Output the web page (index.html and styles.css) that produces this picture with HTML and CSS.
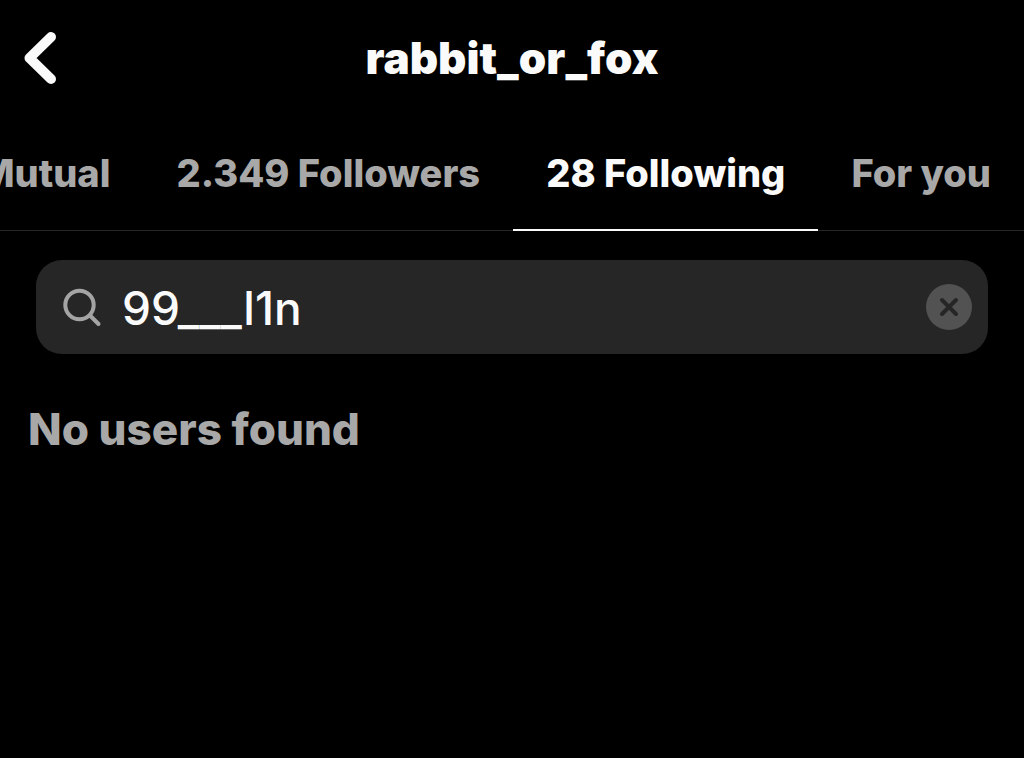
FILE: index.html
```
<!DOCTYPE html>
<html lang="en">
<head>
  <meta charset="UTF-8" />
  <meta name="viewport" content="width=device-width, initial-scale=1.0"/>
  <title>rabbit_or_fox</title>
  <link rel="stylesheet" href="styles.css">
</head>
<body>
  <header class="header">
    <button class="back" type="button" aria-label="Back">
      <svg width="36" height="56" viewBox="0 0 36 56" fill="none" stroke="#fafafa" stroke-linecap="round" stroke-linejoin="round">
        <path stroke-width="10" d="M29 7 L7.5 28 L29 49"/>
      </svg>
    </button>
    <h1 class="username">rabbit_or_fox</h1>
  </header>

  <nav class="tabs">
    <a class="tab" href="#mutual">Mutual</a>
    <a class="tab" href="#followers">2.349 Followers</a>
    <a class="tab active" href="#following">28 Following</a>
    <a class="tab" href="#foryou">For you</a>
  </nav>

  <main class="content">
    <form class="search">
      <svg width="40" height="40" viewBox="0 0 40 40" fill="none" stroke="#a4a4a4" stroke-width="4" stroke-linecap="round">
        <circle cx="17.5" cy="18" r="14.2"/>
        <path d="M28 28.5 L36.5 37"/>
      </svg>
      <input class="search-input" type="text" aria-label="Search" value="99___l1n">
      <button class="clear" type="button" aria-label="Clear search">
        <svg width="20" height="20" viewBox="0 0 20 20" fill="none" stroke="#262626" stroke-width="4" stroke-linecap="round">
          <path d="M3 3 L17 17 M17 3 L3 17"/>
        </svg>
      </button>
    </form>
    <p class="empty">No users found</p>
  </main>
</body>
</html>
```
FILE: styles.css
```
* {
  box-sizing: border-box;
}

body {
  margin: 0;
  background: #000;
  color: #fafafa;
  font-family: Inter, 'Liberation Sans', sans-serif;
  overflow-x: hidden;
}

button {
  border: none;
  padding: 0;
  cursor: pointer;
}

.header {
  display: grid;
  grid-template-columns: 36px 1fr 36px;
  align-items: center;
  height: 116px;
  padding: 0 22px;
}

.back {
  display: flex;
  background: none;
}

.username {
  margin: 0;
  text-align: center;
  font-size: 44px;
  font-weight: 900;
}

.tabs {
  display: flex;
  justify-content: flex-end;
  height: 115px;
  border-bottom: 1px solid #262626;
}

.tab {
  flex: none;
  padding: 0 33px;
  margin-bottom: -1px;
  border-bottom: 2px solid transparent;
  color: #a8a8a8;
  font-size: 38px;
  font-weight: 800;
  line-height: 115px;
  text-decoration: none;
}

.tab.active {
  color: #fafafa;
  border-bottom-color: #fafafa;
}

.content {
  padding: 29px 36px;
}

.search {
  display: flex;
  align-items: center;
  gap: 20px;
  height: 94px;
  padding: 0 16px 0 26px;
  border-radius: 26px;
  background: #262626;
}

.search-input {
  flex: 1;
  min-width: 0;
  padding: 2px 0 0;
  border: none;
  outline: none;
  background: none;
  color: #fafafa;
  font-family: inherit;
  font-size: 46px;
  font-weight: 500;
}

.clear {
  display: flex;
  align-items: center;
  justify-content: center;
  width: 46px;
  height: 46px;
  border-radius: 50%;
  background: #525252;
}

.empty {
  margin: 48px -8px 0;
  color: #a8a8a8;
  font-size: 44px;
  font-weight: 800;
}
```
